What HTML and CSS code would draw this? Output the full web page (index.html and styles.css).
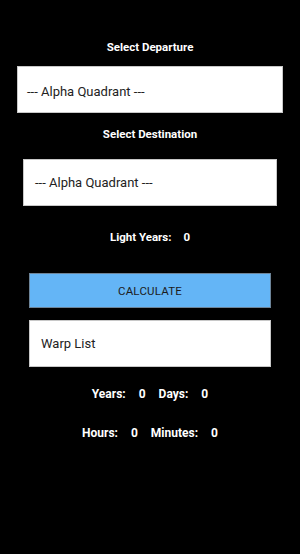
FILE: index.html
```html
<!DOCTYPE html>
<html lang="en">
<head>
    <meta charset="UTF-8">
    <meta name="viewport" content="width=device-width, initial-scale=1.0">
    <title>Warp Calculator</title>

    <link rel="stylesheet" href="styles.css">
</head>
<body>

    <div class="calc-container">
        <div class="label label-departure">Select Departure</div>
        <div class="picker picker-departure">--- Alpha Quadrant ---</div>

        <div class="label label-destination">Select Destination</div>
        <div class="picker picker-destination">--- Alpha Quadrant ---</div>

        <div class="stat-row light-years">
            <span>Light Years:</span>
            <span>0</span>
        </div>

        <button type="button" class="calc-button">CALCULATE</button>

        <div class="picker warp-list">Warp List</div>

        <div class="stat-row years-row">
            <span>Years:</span>
            <span>0</span>
            <span>Days:</span>
            <span>0</span>
        </div>

        <div class="stat-row hours-row">
            <span>Hours:</span>
            <span>0</span>
            <span>Minutes:</span>
            <span>0</span>
        </div>
    </div>

</body>
</html>
```
FILE: styles.css
```css
*, *::before, *::after {
    box-sizing: border-box;
}
body {
    font-family: Roboto, 'Liberation Sans', sans-serif;
    background-color: black;
    margin: 0;
    padding: 0;
}

.calc-container {
    display: flex;
    flex-direction: column;
    align-items: center;
    padding-top: 39px;
    height: 554px;
}

.label {
    color: white;
    font-size: 11.5px;
    font-weight: bold;
    line-height: 16px;
}

.picker {
    display: flex;
    align-items: center;
    background-color: white;
    border: 1px solid #c8c8c8;
    color: #222;
    font-size: 13px;
}

.picker-departure {
    width: 266px;
    height: 47px;
    margin-top: 11px;
    padding: 3px 0 0 9px;
}

.label-destination {
    margin-top: 13px;
}

.picker-destination {
    width: 254px;
    height: 47px;
    margin-top: 17px;
    padding-left: 11px;
}

.stat-row {
    display: flex;
    gap: 13px;
    color: white;
    font-size: 12px;
    font-weight: bold;
    line-height: 16px;
}

.light-years {
    font-size: 11.5px;
    gap: 12px;
    margin-top: 23px;
}

.calc-button {
    width: 242px;
    height: 35px;
    margin-top: 28px;
    background-color: #64b5f6;
    border: 1px solid #6d8499;
    color: #1c1c1c;
    font-family: Roboto, 'Liberation Sans', sans-serif;
    font-size: 11.5px;
    font-weight: normal;
    letter-spacing: 0.2px;
    padding: 0;
}

.warp-list {
    width: 242px;
    height: 47px;
    margin-top: 12px;
    padding-left: 11px;
}

.years-row {
    margin-top: 19px;
}

.hours-row {
    margin-top: 23px;
}
```
